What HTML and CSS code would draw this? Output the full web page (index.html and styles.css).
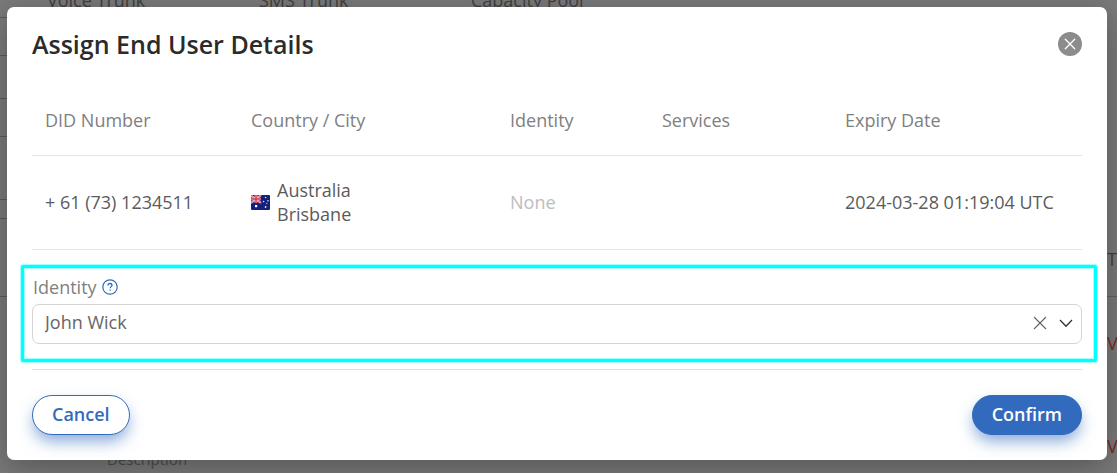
FILE: index.html
```html
<!DOCTYPE html>
<html lang="en">
<head>
<meta charset="utf-8">
<meta name="viewport" content="width=device-width, initial-scale=1">
<title>Assign End User Details</title>
<link rel="stylesheet" href="styles.css">
</head>
<body>
<div class="stage">
  <div class="page">
    <div class="page-lines">
      <span class="line line-a"></span>
      <span class="line line-b"></span>
      <span class="line line-c"></span>
      <span class="line line-b"></span>
      <span class="line line-d"></span>
      <span class="line line-e"></span>
      <span class="line line-f"></span>
    </div>
    <div class="page-main">
      <div class="page-heads"><span>Voice Trunk</span><span>SMS Trunk</span><span>Capacity Pool</span></div>
      <div class="page-description">Description</div>
    </div>
    <div class="page-side">
      <span class="side-cell">Trunk</span>
      <span class="side-link">V</span>
      <span class="side-link">V</span>
    </div>
  </div>

  <div class="backdrop">
    <section class="modal" role="dialog" aria-labelledby="modal-title">
      <header class="modal-header">
        <h1 class="modal-title" id="modal-title">Assign End User Details</h1>
        <button class="close" type="button" aria-label="Close">
          <svg viewBox="0 0 24 24" width="24" height="24"><circle cx="12" cy="12" r="12" fill="#8c8c8c"/><path d="M7.3 7.3l9.4 9.4M16.7 7.3l-9.4 9.4" stroke="#fff" stroke-width="1.3" stroke-linecap="round"/></svg>
        </button>
      </header>

      <table class="numbers">
        <colgroup><col class="col-number"><col class="col-country"><col class="col-identity"><col class="col-services"><col class="col-expiry"></colgroup>
        <thead>
          <tr><th>DID Number</th><th>Country / City</th><th>Identity</th><th>Services</th><th>Expiry Date</th></tr>
        </thead>
        <tbody>
          <tr>
            <td>+ 61 (73) 1234511</td>
            <td>
              <div class="country">
                <svg class="flag" viewBox="0 0 19 15" width="19" height="15" aria-hidden="true">
                  <rect width="19" height="15" rx="1" fill="#14217a"/>
                  <path d="M0 0.5L10 8M10 0L0 8" stroke="#f3d5de" stroke-width="2"/>
                  <path d="M0 0.5L10 8M10 0L0 8" stroke="#dc4358" stroke-width="0.8"/>
                  <path d="M5 0v8M0 4h10" stroke="#f3d5de" stroke-width="2.6"/>
                  <path d="M5 0v8M0 4h10" stroke="#df3046" stroke-width="1.4"/>
                  <rect x="4" y="10" width="2.2" height="2.2" fill="#fff"/>
                  <circle cx="14.6" cy="2.5" r="0.8" fill="#dfe3f5"/>
                  <circle cx="12.6" cy="6.5" r="0.8" fill="#dfe3f5"/>
                  <circle cx="17" cy="5.7" r="0.8" fill="#dfe3f5"/>
                  <circle cx="15.8" cy="8.3" r="0.6" fill="#dfe3f5"/>
                  <circle cx="14.6" cy="12" r="0.9" fill="#dfe3f5"/>
                </svg>
                <span>Australia<br>Brisbane</span>
              </div>
            </td>
            <td class="none">None</td>
            <td></td>
            <td>2024-03-28 01:19:04 UTC</td>
          </tr>
        </tbody>
      </table>

      <div class="highlight">
        <div class="label-row">
          <label for="identity">Identity</label>
          <button class="help" type="button" aria-label="About identity">
            <svg viewBox="0 0 16 16" width="16" height="16" fill="none" stroke="#326bbd"><circle cx="8" cy="8" r="7.2" stroke-width="1.2"/><path d="M6 6.5C6 5.2 6.9 4.5 8 4.5s2 .7 2 1.8C10 7.6 8.2 7.7 8.2 9.3" stroke-width="1.3"/><path d="M8.2 10.5v1.3" stroke-width="1.3"/></svg>
          </button>
        </div>
        <div class="select-box">
          <select class="select" id="identity"><option>John Wick</option></select>
          <button class="clear" type="button" aria-label="Clear identity">
            <svg viewBox="0 0 14 14" width="14" height="14"><path d="M1 1l12 12M13 1L1 13" stroke="#666" stroke-width="1.2"/></svg>
          </button>
          <svg class="chevron" viewBox="0 0 14 14" width="14" height="14" fill="none" aria-hidden="true"><path d="M1 4l6 6.3L13 4" stroke="#333" stroke-width="1.3"/></svg>
        </div>
      </div>

      <footer class="modal-footer">
        <button class="button" type="button">Cancel</button>
        <button class="button primary" type="button">Confirm</button>
      </footer>
    </section>
  </div>
</div>
</body>
</html>
```
FILE: styles.css
```css
* {
  box-sizing: border-box;
}

body {
  margin: 0;
  background: #7a7a7a;
  color: #5b5b5b;
  font: 18px/24px "Open Sans", sans-serif;
}

button {
  padding: 0;
  border: 0;
  background: none;
  font: inherit;
  cursor: pointer;
}

svg {
  display: block;
}

.stage {
  display: grid;
  min-height: 100vh;
  overflow: hidden;
}

.page,
.backdrop {
  grid-area: 1 / 1;
  min-width: 0;
}

/* Dimmed page behind the dialog */
.page {
  display: grid;
  grid-template-columns: 7px 1fr 10px;
  color: #414141;
}

.page-lines {
  display: flex;
  flex-direction: column;
}

.line {
  border-bottom: 1px solid #5c5c5c;
}

.line-a { height: 18px; }
.line-b { height: 38px; }
.line-c { height: 43px; }
.line-d { height: 63px; }
.line-e { height: 19px; }
.line-f { height: 78px; }

.page-main {
  display: flex;
  flex-direction: column;
  justify-content: space-between;
  min-width: 0;
}

.page-heads {
  display: grid;
  grid-template-columns: 212px 212px 1fr;
  margin-top: -12px;
  padding-left: 40px;
}

.page-description {
  padding-left: 100px;
  margin-bottom: 2px;
  color: #4d4d4d;
  font-size: 15px;
}

.page-side {
  display: flex;
  flex-direction: column;
  padding-top: 247px;
  overflow: hidden;
}

.side-cell {
  height: 50px;
  margin-bottom: 34px;
  border-bottom: 1px solid #606060;
}

.side-link {
  margin-bottom: 79px;
  color: #7c2a22;
}

.side-link:last-child {
  margin-bottom: 0;
}

.backdrop {
  padding: 7px 10px 13px 7px;
}

.modal {
  position: relative;
  padding: 25px;
  border-radius: 7px;
  background: #fff;
  box-shadow: 0 8px 32px rgba(0, 0, 0, 0.3);
}

.modal-header,
.modal-footer {
  display: flex;
  align-items: center;
  justify-content: space-between;
}

.modal-title {
  margin: 0;
  color: #2b2b2b;
  font-size: 25px;
  font-weight: 600;
  line-height: 24px;
}

.numbers {
  width: 100%;
  margin-top: 32px;
  border-collapse: separate;
  border-spacing: 0;
  table-layout: fixed;
}

.col-number { width: 206px; }
.col-country { width: 259px; }
.col-identity { width: 152px; }
.col-services { width: 183px; }
.col-expiry { width: 250px; }

.numbers th,
.numbers td {
  border-bottom: 1px solid #e6e6e6;
  text-align: left;
}

.numbers th {
  padding: 20px 12px 23px 13px;
  color: #808080;
  font-weight: 400;
}

.numbers td {
  padding: 22px 12px 23px 13px;
}

.numbers .none {
  color: #bdbdbd;
}

.country {
  display: flex;
  align-items: center;
  gap: 7px;
}

.highlight {
  margin: 15px -15px 7px -11px;
  padding: 7px 12px 15px 8px;
  border: 3px solid #00ffff;
  border-radius: 2px;
  box-shadow: 0 0 0 1px #a6ffff, inset 0 0 0 1px #a6ffff;
}

.label-row {
  display: flex;
  align-items: center;
  gap: 5px;
  margin-bottom: 5px;
  padding-left: 1px;
  color: #808080;
}

.select-box {
  position: relative;
}

.select {
  display: block;
  width: 100%;
  height: 40px;
  padding: 0 60px 4px 12px;
  border: 1px solid #d4d4d4;
  border-radius: 7px;
  appearance: none;
  background: #fff;
  color: #666;
  font: inherit;
}

.clear {
  position: absolute;
  top: 12px;
  right: 35px;
}

.chevron {
  position: absolute;
  top: 12px;
  right: 9px;
  pointer-events: none;
}

.modal-footer {
  padding-top: 25px;
  border-top: 1px solid #e0e0e0;
}

.button {
  height: 40px;
  padding: 0 19px 2px;
  border: 1px solid #326bbd;
  border-radius: 20px;
  background: #fff;
  box-shadow: 0 8px 16px -2px rgba(50, 107, 189, 0.6);
  color: #326bbd;
  font-weight: 600;
}

.primary {
  background: #326bbd;
  color: #fff;
}
```
